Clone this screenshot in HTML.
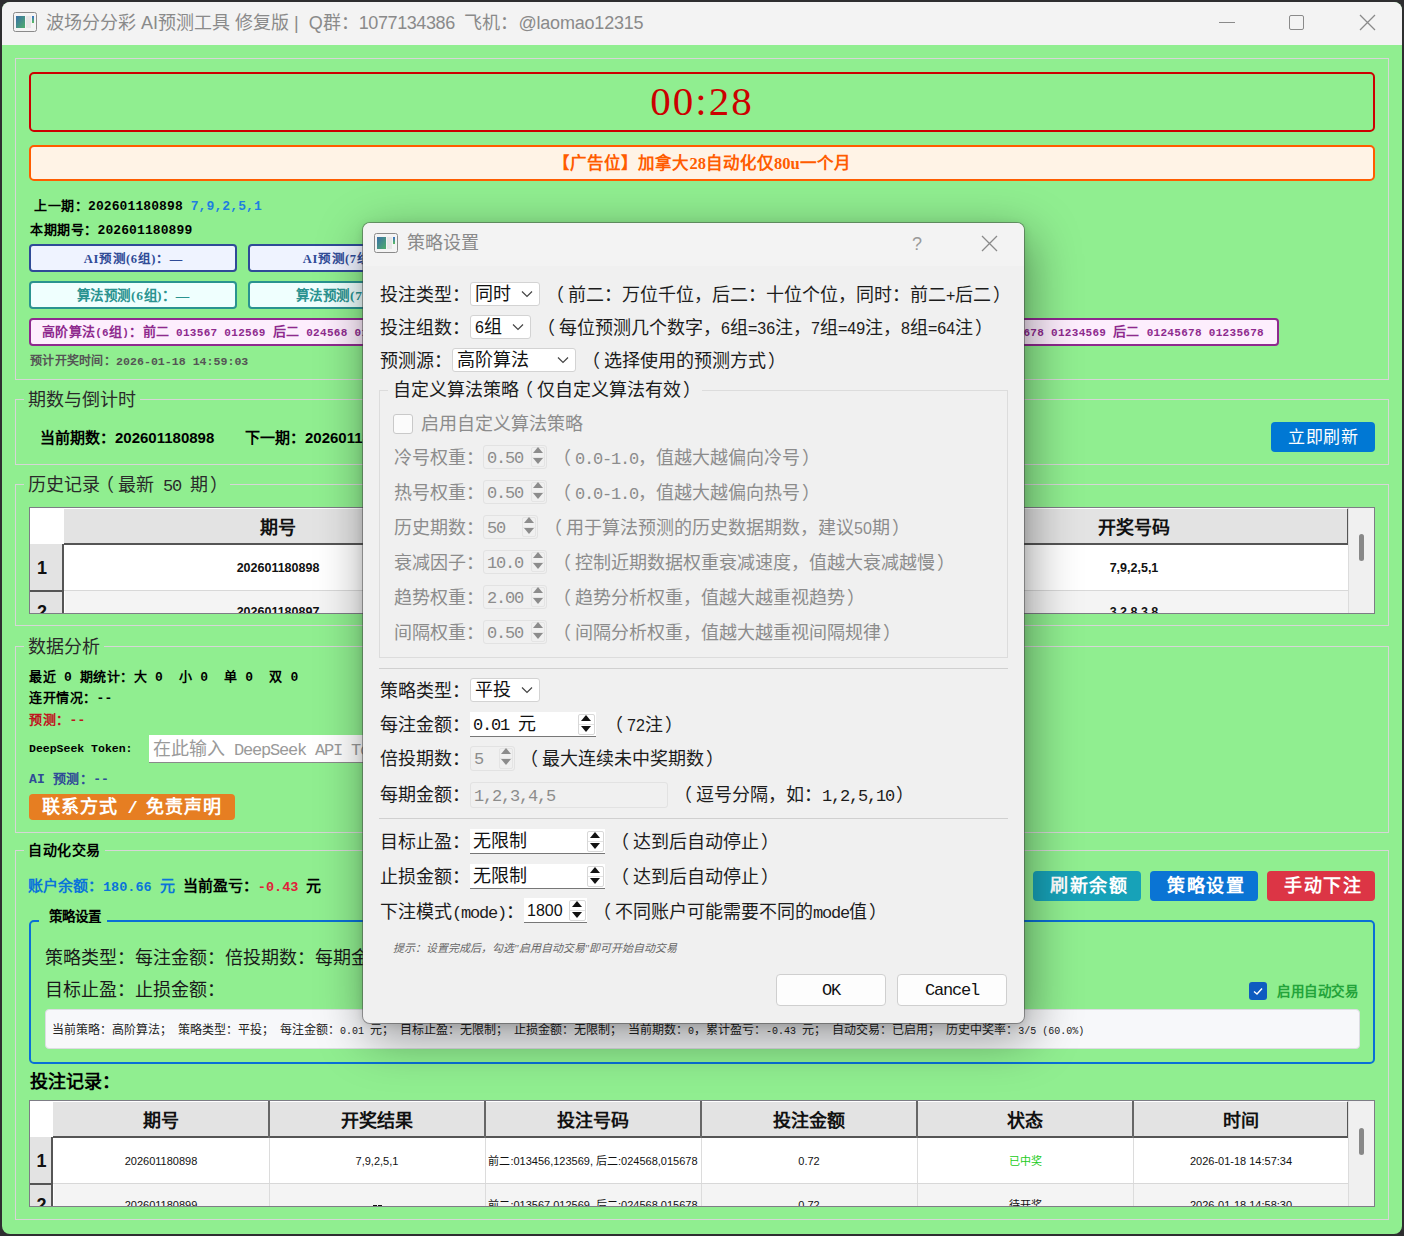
<!DOCTYPE html>
<html lang="zh-CN">
<head>
<meta charset="utf-8">
<style>
html,body{margin:0;padding:0;}
body{width:1404px;height:1236px;overflow:hidden;background:#2e2e30;position:relative;font-family:"Liberation Serif",serif;}
.a{position:absolute;box-sizing:border-box;}
.t{position:absolute;white-space:pre;line-height:20px;height:20px;}
.sans{font-family:"Liberation Sans",sans-serif;}
.serif{font-family:"Liberation Serif",serif;}
.mono{font-family:"Liberation Mono",monospace;}
.b{font-weight:bold;}
#win{left:2px;top:2px;width:1400px;height:1232px;border-radius:8px;background:#90ee90;overflow:hidden;}
#titlebar{left:0;top:0;width:1400px;height:43px;background:#f3f3f3;}
.frame{border:1px solid #d6d6d6;}
.gtitle{position:absolute;white-space:pre;background:#90ee90;padding:0 4px;font-size:18px;color:#2a2a2a;line-height:24px;height:24px;}
.predbtn{border-radius:4px;border:2px solid #2f4b97;background:#eff3ff;color:#2f4b97;font-weight:bold;font-size:12.5px;text-align:center;line-height:26px;letter-spacing:0.6px;text-indent:0.6px;}
.algbtn{border-radius:4px;border:2px solid #2a9390;background:#effffe;color:#2a9390;font-weight:bold;font-size:13.5px;text-align:center;line-height:25px;letter-spacing:0.6px;text-indent:0.6px;}
.tbl{border:1px solid #7d7d85;background:#fff;overflow:hidden;}
.hdr{background:#e3e3e3;}
.hdrtxt{position:absolute;font-family:"Liberation Sans",sans-serif;font-weight:bold;font-size:18px;text-align:center;line-height:40px;color:#111;}
.cell{position:absolute;font-family:"Liberation Sans",sans-serif;font-size:11px;text-align:center;color:#111;white-space:pre;}
.btn{border-radius:4px;color:#fff;text-align:center;font-weight:bold;}
</style>
</head>
<body>
<div id="win" class="a">
  <div id="titlebar" class="a"></div>
</div>

<!-- title bar contents (page coords) -->
<svg class="a" style="left:13px;top:12px" width="24" height="20" viewBox="0 0 24 20">
  <rect x="0.5" y="0.5" width="23" height="19" rx="2" fill="#f4f4f4" stroke="#8a8a8a"/>
  <defs><linearGradient id="ig" x1="0" y1="0" x2="1" y2="1"><stop offset="0" stop-color="#3a6fa8"/><stop offset="1" stop-color="#4fae6a"/></linearGradient>
  <linearGradient id="ig2" x1="0" y1="0" x2="0" y2="1"><stop offset="0" stop-color="#3a6fc8"/><stop offset="1" stop-color="#5bbf5b"/></linearGradient></defs>
  <rect x="3" y="4" width="9" height="12" fill="url(#ig)"/>
  <rect x="13" y="4" width="5" height="12" fill="#e6e6e6"/>
  <rect x="19" y="4" width="2" height="7" fill="url(#ig2)"/>
</svg>
<div class="t sans" style="left:46px;top:12px;font-size:18px;color:#8a8a8a;line-height:22px;height:22px;">波场分分彩 AI预测工具 修复版 |  Q群：<span style="letter-spacing:-0.4px">1077134386 </span> 飞机：<span style="letter-spacing:-0.2px">@laomao12315</span></div>
<div class="a" style="left:1219px;top:22px;width:16px;height:1px;background:#8a8a8a"></div>
<div class="a" style="left:1289px;top:15px;width:15px;height:15px;border:1.5px solid #8a8a8a;border-radius:2px"></div>
<svg class="a" style="left:1359px;top:14px" width="17" height="17" viewBox="0 0 17 17"><path d="M1 1L16 16M16 1L1 16" stroke="#8a8a8a" stroke-width="1.3"/></svg>

<!-- ===== top frame ===== -->
<div class="a frame" style="left:15px;top:58px;width:1374px;height:322px"></div>
<div class="a" style="left:29px;top:72px;width:1346px;height:60px;border:2px solid #cc0000;border-radius:5px"></div>
<div class="t serif" style="left:29px;top:76px;width:1346px;text-align:center;font-size:41px;line-height:50px;height:50px;color:#cc0000;letter-spacing:2px">00:28</div>
<div class="a" style="left:29px;top:145px;width:1346px;height:36px;border:2px solid #ff5c00;border-radius:5px;background:#fff3e6"></div>
<div class="t serif b" style="left:29px;top:154px;width:1346px;text-align:center;font-size:16.5px;color:#ff5c00">【广告位】加拿大28自动化仅80u一个月</div>

<div class="t serif b" style="left:34px;top:196px;font-size:13px;letter-spacing:0.5px;color:#000">上一期：<i style="font-family:'Liberation Mono',monospace;font-style:normal;font-size:13px;letter-spacing:0.1px">202601180898 </i><span style="color:#1e7fe0"><i style="font-family:'Liberation Mono',monospace;font-style:normal;font-size:13px;letter-spacing:0.1px">7,9,2,5,1</i></span></div>
<div class="t serif b" style="left:30px;top:220px;font-size:13px;letter-spacing:0.5px;color:#000">本期期号：<i style="font-family:'Liberation Mono',monospace;font-style:normal;font-size:13px;letter-spacing:0.1px">202601180899</i></div>

<div class="a predbtn" style="left:29px;top:244px;width:208px;height:28px">AI预测(6组)：—</div>
<div class="a predbtn" style="left:248px;top:244px;width:208px;height:28px">AI预测(7组)：—</div>
<div class="a predbtn" style="left:467px;top:244px;width:208px;height:28px">AI预测(8组)：—</div>
<div class="a algbtn" style="left:29px;top:281px;width:208px;height:28px">算法预测(6组)：—</div>
<div class="a algbtn" style="left:248px;top:281px;width:208px;height:28px">算法预测(7组)：—</div>
<div class="a algbtn" style="left:467px;top:281px;width:208px;height:28px">算法预测(8组)：—</div>
<div class="a" style="left:29px;top:318px;width:1250px;height:28px;border:2px solid #8e2a8e;border-radius:4px;background:#fdeefd"></div>
<div class="t serif b" style="left:42px;top:322px;font-size:13px;letter-spacing:0.3px;color:#8e2a8e">高阶算法<i style="font-family:'Liberation Mono',monospace;font-style:normal;font-size:11px;letter-spacing:0.3px">(6</i>组<i style="font-family:'Liberation Mono',monospace;font-style:normal;font-size:11px;letter-spacing:0.3px">)</i>：前二<i style="font-family:'Liberation Mono',monospace;font-style:normal;font-size:11px;letter-spacing:0.3px"> 013567 012569 </i>后二<i style="font-family:'Liberation Mono',monospace;font-style:normal;font-size:11px;letter-spacing:0.3px"> 024568 015678 </i>｜高阶算法<i style="font-family:'Liberation Mono',monospace;font-style:normal;font-size:11px;letter-spacing:0.3px">(7</i>组<i style="font-family:'Liberation Mono',monospace;font-style:normal;font-size:11px;letter-spacing:0.3px">)</i>：前二<i style="font-family:'Liberation Mono',monospace;font-style:normal;font-size:11px;letter-spacing:0.3px"> 0134567 0125679</i></div>
<div class="t serif b" style="left:1004px;top:322px;width:260px;text-align:right;font-size:13px;letter-spacing:0.3px;color:#8e2a8e;overflow:hidden"><i style="font-family:'Liberation Mono',monospace;font-style:normal;font-size:11px;letter-spacing:0.3px">5678 01234569 </i>后二<i style="font-family:'Liberation Mono',monospace;font-style:normal;font-size:11px;letter-spacing:0.3px"> 01245678 01235678</i></div>
<div class="t serif b" style="left:30px;top:351px;font-size:12px;letter-spacing:0.3px;color:#555">预计开奖时间：<i style="font-family:'Liberation Mono',monospace;font-style:normal;font-size:11.6px;letter-spacing:0px">2026-01-18 14:59:03</i></div>

<!-- ===== 期数与倒计时 ===== -->
<div class="a frame" style="left:15px;top:399px;width:1374px;height:66px"></div>
<div class="gtitle" style="left:24px;top:388px">期数与倒计时</div>
<div class="t sans b" style="left:40px;top:428px;font-size:15px;color:#000">当前期数：202601180898</div>
<div class="t sans b" style="left:245px;top:428px;font-size:15px;color:#000">下一期：202601180899</div>
<div class="a btn" style="left:1271px;top:422px;width:104px;height:30px;background:#0078d4;font-weight:normal;font-size:17px;line-height:32px;letter-spacing:0.7px;text-indent:0.7px">立即刷新</div>

<!-- ===== 历史记录 ===== -->
<div class="a frame" style="left:15px;top:484px;width:1374px;height:142px"></div>
<div class="gtitle" style="left:24px;top:473px">历史记录<i class="lp">（</i>最新<i class="m"> 50 </i>期<i class="rp">）</i></div>
<div class="a tbl" style="left:29px;top:507px;width:1346px;height:107px">
  <div class="a hdr" style="left:34px;top:0;width:1285px;height:37px;border-top:1px solid #fff;border-right:2px solid #555;border-bottom:2px solid #555"></div>
  <div class="a hdr" style="left:0;top:36px;width:34px;height:46px;border-right:2px solid #555;"></div>
  <div class="a hdr" style="left:0;top:82px;width:34px;height:30px;border-top:2px solid #555;border-right:2px solid #555"></div>
  <div class="a" style="left:34px;top:82px;width:1285px;height:1px;background:#d8d8d8"></div>
  <div class="a" style="left:35px;top:83px;width:1284px;height:30px;background:#f4f4f4"></div>
  <div class="a" style="left:1318px;top:0;width:28px;height:107px;background:#f0f0f0;border-left:1px solid #dcdcdc"></div>
  <div class="a" style="left:1329px;top:26px;width:5px;height:27px;background:#888;border-radius:3px"></div>
  <div class="hdrtxt" style="left:34px;top:0;width:428px">期号</div>
  <div class="hdrtxt" style="left:462px;top:0;width:428px">开奖时间</div>
  <div class="hdrtxt" style="left:890px;top:0;width:428px">开奖号码</div>
  <div class="cell b" style="left:7px;top:50px;width:12px;font-size:18px;line-height:20px;text-align:left">1</div>
  <div class="cell b" style="left:7px;top:94px;width:12px;font-size:18px;line-height:20px;text-align:left">2</div>
  <div class="cell b" style="left:34px;top:50px;width:428px;font-size:12.5px;line-height:20px">202601180898</div>
  <div class="cell b" style="left:890px;top:50px;width:428px;font-size:12.5px;line-height:20px">7,9,2,5,1</div>
  <div class="cell b" style="left:34px;top:94px;width:428px;font-size:12.5px;line-height:20px">202601180897</div>
  <div class="cell b" style="left:890px;top:94px;width:428px;font-size:12.5px;line-height:20px">3,2,8,3,8</div>
</div>
<!-- ===== 数据分析 ===== -->
<div class="a frame" style="left:15px;top:646px;width:1374px;height:187px"></div>
<div class="gtitle" style="left:24px;top:635px">数据分析</div>
<div class="t serif b" style="left:29px;top:667px;font-size:13px;letter-spacing:0.5px;color:#000">最近<i style="font-family:'Liberation Mono',monospace;font-style:normal;font-size:13px;letter-spacing:0.1px"> 0 </i>期统计：大<i style="font-family:'Liberation Mono',monospace;font-style:normal;font-size:13px;letter-spacing:0.1px"> 0  </i>小<i style="font-family:'Liberation Mono',monospace;font-style:normal;font-size:13px;letter-spacing:0.1px"> 0  </i>单<i style="font-family:'Liberation Mono',monospace;font-style:normal;font-size:13px;letter-spacing:0.1px"> 0  </i>双<i style="font-family:'Liberation Mono',monospace;font-style:normal;font-size:13px;letter-spacing:0.1px"> 0</i></div>
<div class="t serif b" style="left:29px;top:688px;font-size:13px;letter-spacing:0.5px;color:#000">连开情况：<i style="font-family:'Liberation Mono',monospace;font-style:normal;font-size:13px;letter-spacing:0.1px">--</i></div>
<div class="t serif b" style="left:29px;top:710px;font-size:13px;letter-spacing:0.5px;color:#c0141e">预测：<i style="font-family:'Liberation Mono',monospace;font-style:normal;font-size:13px;letter-spacing:0.1px">--</i></div>
<div class="t b" style="left:29px;top:737px;color:#000"><i style="font-family:'Liberation Mono',monospace;font-style:normal;font-size:11.5px;letter-spacing:0px">DeepSeek Token:</i></div>
<div class="a" style="left:149px;top:735px;width:560px;height:28px;background:#fff;border-bottom:1px solid #8a8a8a"></div>
<div class="t serif" style="left:153px;top:739px;font-size:18px;color:#9a9a9a;">在此输入<i style="font-family:'Liberation Mono',monospace;font-style:normal;font-size:17px;letter-spacing:-1.2px"> DeepSeek API Token</i></div>
<div class="t serif b" style="left:29px;top:769px;font-size:13px;letter-spacing:0.5px;color:#2f4b97"><i style="font-family:'Liberation Mono',monospace;font-style:normal;font-size:13px;letter-spacing:0.1px">AI </i>预测：<i style="font-family:'Liberation Mono',monospace;font-style:normal;font-size:13px;letter-spacing:0.1px">--</i></div>
<div class="a btn" style="left:29px;top:794px;width:206px;height:26px;background:#e67e22;font-size:18px;line-height:26px;letter-spacing:1px">联系方式<i style="font-family:'Liberation Mono',monospace;font-style:normal;font-size:17px;letter-spacing:-1.2px"> / </i>免责声明</div>

<!-- ===== 自动化交易 ===== -->
<div class="a frame" style="left:15px;top:850px;width:1374px;height:370px"></div>
<div class="gtitle b" style="left:24px;top:839px;font-size:14px;letter-spacing:0.5px;color:#000">自动化交易</div>
<div class="t serif b" style="left:28px;top:876px;font-size:15px;color:#0a74da">账户余额：<i style="font-family:'Liberation Mono',monospace;font-style:normal;font-size:13.5px;letter-spacing:0px">180.66 </i>元<i style="font-family:'Liberation Mono',monospace;font-style:normal;font-size:13.5px;letter-spacing:0px"> </i><span style="color:#000">当前盈亏：</span><span style="color:#e0203a"><i style="font-family:'Liberation Mono',monospace;font-style:normal;font-size:13.5px;letter-spacing:0px">-0.43</i></span><span style="color:#000"><i style="font-family:'Liberation Mono',monospace;font-style:normal;font-size:13.5px;letter-spacing:0px"> </i>元</span></div>
<div class="a btn" style="left:1033px;top:871px;width:108px;height:30px;background:#17a2b8;font-size:17px;line-height:30px;font-size:18px;letter-spacing:1.5px;text-indent:4px">刷新余额</div>
<div class="a btn" style="left:1150px;top:871px;width:108px;height:30px;background:#0a74d4;font-size:17px;line-height:30px;font-size:18px;letter-spacing:1.5px;text-indent:4px">策略设置</div>
<div class="a btn" style="left:1267px;top:871px;width:108px;height:30px;background:#dc3545;font-size:17px;line-height:30px;font-size:18px;letter-spacing:1.5px;text-indent:4px">手动下注</div>

<div class="a" style="left:29px;top:920px;width:1346px;height:144px;border:2px solid #0a6fd6;border-radius:5px"></div>
<div class="gtitle b" style="left:39px;top:905px;font-size:13.5px;color:#000;padding:0 6px 0 10px">策略设置</div>
<div class="t serif" style="left:45px;top:948px;font-size:18px;color:#1a1a1a">策略类型：每注金额：倍投期数：每期金额：</div>
<div class="t serif" style="left:45px;top:980px;font-size:18px;color:#1a1a1a">目标止盈：止损金额：</div>
<div class="a" style="left:1249px;top:982px;width:18px;height:18px;border-radius:3px;background:#0f5cc0"></div>
<svg class="a" style="left:1249px;top:982px" width="18" height="18" viewBox="0 0 18 18"><path d="M5 9.5L8 12L13 6.5" fill="none" stroke="#fff" stroke-width="1.4"/></svg>
<div class="t serif b" style="left:1277px;top:982px;font-size:13.5px;color:#23a33a;letter-spacing:0.5px">启用自动交易</div>
<div class="a" style="left:45px;top:1009px;width:1315px;height:40px;background:#f7f8fa;border:1px solid #dcdce2;border-radius:4px"></div>
<div class="t serif" style="left:52px;top:1020px;font-size:12px;color:#222">当前策略：高阶算法；<i style="font-family:'Liberation Mono',monospace;font-style:normal;font-size:10px;letter-spacing:0px"> </i>策略类型：平投；<i style="font-family:'Liberation Mono',monospace;font-style:normal;font-size:10px;letter-spacing:0px"> </i>每注金额：<i style="font-family:'Liberation Mono',monospace;font-style:normal;font-size:10px;letter-spacing:0px">0.01 </i>元；<i style="font-family:'Liberation Mono',monospace;font-style:normal;font-size:10px;letter-spacing:0px"> </i>目标止盈：无限制；<i style="font-family:'Liberation Mono',monospace;font-style:normal;font-size:10px;letter-spacing:0px"> </i>止损金额：无限制；<i style="font-family:'Liberation Mono',monospace;font-style:normal;font-size:10px;letter-spacing:0px"> </i>当前期数：<i style="font-family:'Liberation Mono',monospace;font-style:normal;font-size:10px;letter-spacing:0px">0</i>，累计盈亏：<i style="font-family:'Liberation Mono',monospace;font-style:normal;font-size:10px;letter-spacing:0px">-0.43 </i>元；<i style="font-family:'Liberation Mono',monospace;font-style:normal;font-size:10px;letter-spacing:0px"> </i>自动交易：已启用；<i style="font-family:'Liberation Mono',monospace;font-style:normal;font-size:10px;letter-spacing:0px"> </i>历史中奖率：<i style="font-family:'Liberation Mono',monospace;font-style:normal;font-size:10px;letter-spacing:0px">3/5 (60.0%)</i></div>

<div class="t serif b" style="left:30px;top:1071px;font-size:18px;color:#000;line-height:22px;height:22px">投注记录：</div>
<div class="a tbl" style="left:29px;top:1100px;width:1346px;height:107px">
  <div class="a hdr" style="left:23px;top:0;width:1296px;height:37px;border-top:1px solid #fff;border-right:2px solid #555;border-bottom:2px solid #555"></div>
  <div class="a" style="left:238px;top:0;width:2px;height:37px;background:#666"></div>
  <div class="a" style="left:454px;top:0;width:2px;height:37px;background:#666"></div>
  <div class="a" style="left:670px;top:0;width:2px;height:37px;background:#666"></div>
  <div class="a" style="left:886px;top:0;width:2px;height:37px;background:#666"></div>
  <div class="a" style="left:1102px;top:0;width:2px;height:37px;background:#666"></div>
  <div class="a" style="left:239px;top:37px;width:1px;height:70px;background:#dcdcdc"></div>
  <div class="a" style="left:455px;top:37px;width:1px;height:70px;background:#dcdcdc"></div>
  <div class="a" style="left:671px;top:37px;width:1px;height:70px;background:#dcdcdc"></div>
  <div class="a" style="left:887px;top:37px;width:1px;height:70px;background:#dcdcdc"></div>
  <div class="a" style="left:1103px;top:37px;width:1px;height:70px;background:#dcdcdc"></div>
  <div class="a hdr" style="left:0;top:36px;width:23px;height:46px;border-right:2px solid #555;"></div>
  <div class="a hdr" style="left:0;top:82px;width:23px;height:30px;border-top:2px solid #555;border-right:2px solid #555"></div>
  <div class="a" style="left:23px;top:82px;width:1296px;height:1px;background:#d8d8d8"></div>
  <div class="a" style="left:24px;top:83px;width:1295px;height:30px;background:#f4f4f4;z-index:0"></div>
  <div class="a" style="left:239px;top:83px;width:1px;height:30px;background:#dcdcdc"></div>
  <div class="a" style="left:455px;top:83px;width:1px;height:30px;background:#dcdcdc"></div>
  <div class="a" style="left:671px;top:83px;width:1px;height:30px;background:#dcdcdc"></div>
  <div class="a" style="left:887px;top:83px;width:1px;height:30px;background:#dcdcdc"></div>
  <div class="a" style="left:1103px;top:83px;width:1px;height:30px;background:#dcdcdc"></div>
  <div class="a" style="left:1318px;top:0;width:28px;height:107px;background:#f0f0f0;border-left:1px solid #dcdcdc"></div>
  <div class="a" style="left:1329px;top:27px;width:5px;height:27px;background:#888;border-radius:3px"></div>
  <div class="hdrtxt" style="left:23px;top:0;width:216px">期号</div>
  <div class="hdrtxt" style="left:239px;top:0;width:216px">开奖结果</div>
  <div class="hdrtxt" style="left:455px;top:0;width:216px">投注号码</div>
  <div class="hdrtxt" style="left:671px;top:0;width:216px">投注金额</div>
  <div class="hdrtxt" style="left:887px;top:0;width:216px">状态</div>
  <div class="hdrtxt" style="left:1103px;top:0;width:216px">时间</div>
  <div class="cell b" style="left:0;top:50px;width:23px;font-size:18px;line-height:20px;">1</div>
  <div class="cell b" style="left:0;top:94px;width:23px;font-size:18px;line-height:20px;">2</div>
  <div class="cell" style="left:23px;top:50px;width:216px;line-height:20px">202601180898</div>
  <div class="cell" style="left:239px;top:50px;width:216px;line-height:20px">7,9,2,5,1</div>
  <div class="cell" style="left:455px;top:50px;width:216px;line-height:20px">前二:013456,123569, 后二:024568,015678</div>
  <div class="cell" style="left:671px;top:50px;width:216px;line-height:20px">0.72</div>
  <div class="cell" style="left:887px;top:50px;width:216px;line-height:20px;color:#22cc22">已中奖</div>
  <div class="cell" style="left:1103px;top:50px;width:216px;line-height:20px">2026-01-18 14:57:34</div>
  <div class="cell" style="left:23px;top:94px;width:216px;line-height:20px">202601180899</div>
  <div class="a" style="left:343px;top:104px;width:4px;height:2px;background:#111"></div><div class="a" style="left:348px;top:104px;width:4px;height:2px;background:#111"></div>
  <div class="cell" style="left:455px;top:94px;width:216px;line-height:20px">前二:013567,012569, 后二:024568,015678</div>
  <div class="cell" style="left:671px;top:94px;width:216px;line-height:20px">0.72</div>
  <div class="cell" style="left:887px;top:94px;width:216px;line-height:20px">待开奖</div>
  <div class="cell" style="left:1103px;top:94px;width:216px;line-height:20px">2026-01-18 14:58:30</div>
</div>
<!-- ===== DIALOG ===== -->
<div class="a" id="dlg" style="left:362px;top:222px;width:663px;height:802px;border-radius:8px;background:#f0f0f0;background-clip:padding-box;border:1px solid rgba(60,60,60,0.45);box-shadow:5px 14px 50px rgba(0,0,0,0.40), 0 2px 8px rgba(0,0,0,0.10);overflow:hidden">
  <div class="a" style="left:0;top:0;width:663px;height:43px;background:#f3f3f3"></div>
</div>
<svg class="a" style="left:374px;top:233px" width="24" height="20" viewBox="0 0 24 20">
  <rect x="0.5" y="0.5" width="23" height="19" rx="2" fill="#f4f4f4" stroke="#8a8a8a"/>
  <rect x="3" y="4" width="9" height="12" fill="url(#ig)"/>
  <rect x="13" y="4" width="5" height="12" fill="#e6e6e6"/>
  <rect x="19" y="4" width="2" height="7" fill="url(#ig2)"/>
</svg>
<div class="t sans" style="left:407px;top:232px;font-size:18px;color:#8a8a8a;line-height:22px;height:22px;">策略设置</div>
<div class="t sans" style="left:912px;top:233px;font-size:18px;color:#9a9a9a;line-height:22px;height:22px;">?</div>
<svg class="a" style="left:981px;top:235px" width="17" height="17" viewBox="0 0 17 17"><path d="M1 1L16 16M16 1L1 16" stroke="#8a8a8a" stroke-width="1.3"/></svg>

<style>
.dl{position:absolute;white-space:pre;font-size:18px;line-height:26px;height:26px;color:#1c1c1c;font-family:"Liberation Serif",serif;}
.m{font-family:"Liberation Mono",monospace;font-size:17px;letter-spacing:-1.2px;font-style:normal;}
.s{font-family:"Liberation Sans",sans-serif;font-size:16px;font-style:normal;}
.dis{color:#8c8c8c;}
.lp{position:relative;left:-4px;font-style:normal;}
.rp{position:relative;left:2px;font-style:normal;}
.combo{position:absolute;box-sizing:border-box;background:#fff;border:1px solid #d3d3d3;border-radius:3px;}
.combo .v{position:absolute;left:4px;top:0;font-size:18px;line-height:22px;white-space:pre;color:#111;}
.chev{position:absolute;top:7px;width:12px;height:8px;}
.spin{position:absolute;box-sizing:border-box;background:#f0f0f0;border:1px solid #e2e2e2;border-radius:3px;}
.spin .v{position:absolute;left:3px;top:0;font-size:18px;line-height:23px;white-space:pre;color:#8c8c8c;}
.espin{position:absolute;box-sizing:border-box;background:#fff;border-bottom:1px solid #777;}
.espin .v{position:absolute;left:3px;top:0;font-size:18px;line-height:24px;white-space:pre;color:#111;}
.sb{position:absolute;box-sizing:border-box;border:1px solid #d8d8d8;border-radius:2px;background:linear-gradient(#fff 0,#fff 9px,#e2e2e2 9px,#e2e2e2 10px,#fff 10px);}
.sbd{position:absolute;box-sizing:border-box;border:1px solid #e4e4e4;border-radius:2px;background:linear-gradient(#f0f0f0 0,#f0f0f0 9px,#e4e4e4 9px,#e4e4e4 10px,#f0f0f0 10px);}
</style>
<svg width="0" height="0" style="position:absolute">
  <defs>
    <path id="chev" d="M1 1.5L6 6.5L11 1.5" fill="none" stroke="#444" stroke-width="1.2"/>
    <g id="updn"><path d="M5 0L10 6H0Z"/><path d="M0 11H10L5 17Z"/></g>
  </defs>
</svg>
<div class="dl " style="left:380px;top:282px">投注类型：</div>
<div class="combo" style="left:470px;top:282px;width:70px;height:24px"><div class="v">同时</div><svg class="chev" style="left:50px" viewBox="0 0 12 8"><path d="M1 1.5L6 6.5L11 1.5" fill="none" stroke="#444" stroke-width="1.2"/></svg></div>
<div class="dl " style="left:550px;top:282px"><i class="lp">（</i>前二：万位千位，后二：十位个位，同时：前二<i class="s">+</i>后二<i class="rp">）</i></div>
<div class="dl " style="left:380px;top:315px">投注组数：</div>
<div class="combo" style="left:470px;top:315px;width:61px;height:24px"><div class="v"><i class="s">6</i>组</div><svg class="chev" style="left:41px" viewBox="0 0 12 8"><path d="M1 1.5L6 6.5L11 1.5" fill="none" stroke="#444" stroke-width="1.2"/></svg></div>
<div class="dl " style="left:541px;top:315px"><i class="lp">（</i>每位预测几个数字，<i class="s">6</i>组<i class="s">=36</i>注，<i class="s">7</i>组<i class="s">=49</i>注，<i class="s">8</i>组<i class="s">=64</i>注<i class="rp">）</i></div>
<div class="dl " style="left:380px;top:348px">预测源：</div>
<div class="combo" style="left:452px;top:348px;width:124px;height:24px"><div class="v">高阶算法</div><svg class="chev" style="left:104px" viewBox="0 0 12 8"><path d="M1 1.5L6 6.5L11 1.5" fill="none" stroke="#444" stroke-width="1.2"/></svg></div>
<div class="dl " style="left:586px;top:348px"><i class="lp">（</i>选择使用的预测方式<i class="rp">）</i></div>
<div class="a" style="left:379px;top:390px;width:629px;height:268px;border:1px solid #dcdcdc;"></div>
<div class="dl" style="left:388px;top:377px;background:#f0f0f0;padding:0 3px 0 5px">自定义算法策略<i class="lp">（</i>仅自定义算法有效<i class="rp">）</i></div>
<div class="a" style="left:393px;top:414px;width:20px;height:20px;border:1px solid #c9c9c9;border-radius:3px;background:#fbfbfb"></div>
<div class="dl dis" style="left:421px;top:411px">启用自定义算法策略</div>
<div class="dl dis" style="left:394px;top:445px">冷号权重：</div>
<div class="spin" style="left:483px;top:445px;width:64px;height:24px"><div class="v"><i class="m">0.50</i></div></div>
<div class="sbd" style="left:531px;top:447px;width:14px;height:20px"></div>
<svg class="a" style="left:533px;top:447px" width="10" height="17" viewBox="0 0 10 17" fill="#8c8c8c"><path d="M5 0L10 6H0Z"/><path d="M0 11H10L5 17Z"/></svg>
<div class="dl dis" style="left:557px;top:445px"><i class="lp">（</i><i class="m">0.0-1.0</i>，值越大越偏向冷号<i class="rp">）</i></div>
<div class="dl dis" style="left:394px;top:480px">热号权重：</div>
<div class="spin" style="left:483px;top:480px;width:64px;height:24px"><div class="v"><i class="m">0.50</i></div></div>
<div class="sbd" style="left:531px;top:482px;width:14px;height:20px"></div>
<svg class="a" style="left:533px;top:482px" width="10" height="17" viewBox="0 0 10 17" fill="#8c8c8c"><path d="M5 0L10 6H0Z"/><path d="M0 11H10L5 17Z"/></svg>
<div class="dl dis" style="left:557px;top:480px"><i class="lp">（</i><i class="m">0.0-1.0</i>，值越大越偏向热号<i class="rp">）</i></div>
<div class="dl dis" style="left:394px;top:515px">历史期数：</div>
<div class="spin" style="left:483px;top:515px;width:55px;height:24px"><div class="v"><i class="m">50</i></div></div>
<div class="sbd" style="left:522px;top:517px;width:14px;height:20px"></div>
<svg class="a" style="left:524px;top:517px" width="10" height="17" viewBox="0 0 10 17" fill="#8c8c8c"><path d="M5 0L10 6H0Z"/><path d="M0 11H10L5 17Z"/></svg>
<div class="dl dis" style="left:548px;top:515px"><i class="lp">（</i>用于算法预测的历史数据期数，建议<i class="s">50</i>期<i class="rp">）</i></div>
<div class="dl dis" style="left:394px;top:550px">衰减因子：</div>
<div class="spin" style="left:483px;top:550px;width:64px;height:24px"><div class="v"><i class="m">10.0</i></div></div>
<div class="sbd" style="left:531px;top:552px;width:14px;height:20px"></div>
<svg class="a" style="left:533px;top:552px" width="10" height="17" viewBox="0 0 10 17" fill="#8c8c8c"><path d="M5 0L10 6H0Z"/><path d="M0 11H10L5 17Z"/></svg>
<div class="dl dis" style="left:557px;top:550px"><i class="lp">（</i>控制近期数据权重衰减速度，值越大衰减越慢<i class="rp">）</i></div>
<div class="dl dis" style="left:394px;top:585px">趋势权重：</div>
<div class="spin" style="left:483px;top:585px;width:64px;height:24px"><div class="v"><i class="m">2.00</i></div></div>
<div class="sbd" style="left:531px;top:587px;width:14px;height:20px"></div>
<svg class="a" style="left:533px;top:587px" width="10" height="17" viewBox="0 0 10 17" fill="#8c8c8c"><path d="M5 0L10 6H0Z"/><path d="M0 11H10L5 17Z"/></svg>
<div class="dl dis" style="left:557px;top:585px"><i class="lp">（</i>趋势分析权重，值越大越重视趋势<i class="rp">）</i></div>
<div class="dl dis" style="left:394px;top:620px">间隔权重：</div>
<div class="spin" style="left:483px;top:620px;width:64px;height:24px"><div class="v"><i class="m">0.50</i></div></div>
<div class="sbd" style="left:531px;top:622px;width:14px;height:20px"></div>
<svg class="a" style="left:533px;top:622px" width="10" height="17" viewBox="0 0 10 17" fill="#8c8c8c"><path d="M5 0L10 6H0Z"/><path d="M0 11H10L5 17Z"/></svg>
<div class="dl dis" style="left:557px;top:620px"><i class="lp">（</i>间隔分析权重，值越大越重视间隔规律<i class="rp">）</i></div>
<div class="a" style="left:379px;top:668px;width:629px;height:1px;background:#d0d0d0"></div>
<div class="dl " style="left:380px;top:678px">策略类型：</div>
<div class="combo" style="left:470px;top:678px;width:70px;height:24px"><div class="v">平投</div><svg class="chev" style="left:50px" viewBox="0 0 12 8"><path d="M1 1.5L6 6.5L11 1.5" fill="none" stroke="#444" stroke-width="1.2"/></svg></div>
<div class="dl " style="left:380px;top:712px">每注金额：</div>
<div class="espin" style="left:470px;top:712px;width:126px;height:25px"><div class="v"><i class="m">0.01 </i>元</div></div>
<div class="sb" style="left:578px;top:714px;width:17px;height:21px"></div>
<svg class="a" style="left:581px;top:715px" width="10" height="17" viewBox="0 0 10 17" fill="#111"><path d="M5 0L10 6H0Z"/><path d="M0 11H10L5 17Z"/></svg>
<div class="dl " style="left:609px;top:712px"><i class="lp">（</i><i class="s">72</i>注<i class="rp">）</i></div>
<div class="dl " style="left:380px;top:746px">倍投期数：</div>
<div class="spin" style="left:470px;top:746px;width:45px;height:25px"><div class="v"><i class="m">5</i></div></div>
<div class="sbd" style="left:499px;top:748px;width:14px;height:21px"></div>
<svg class="a" style="left:501px;top:748px" width="10" height="17" viewBox="0 0 10 17" fill="#8c8c8c"><path d="M5 0L10 6H0Z"/><path d="M0 11H10L5 17Z"/></svg>
<div class="dl " style="left:524px;top:746px"><i class="lp">（</i>最大连续未中奖期数<i class="rp">）</i></div>
<div class="dl " style="left:380px;top:782px">每期金额：</div>
<div class="spin" style="left:470px;top:782px;width:198px;height:26px"><div class="v" style="line-height:25px"><i class="m">1,2,3,4,5</i></div></div>
<div class="dl " style="left:678px;top:782px"><i class="lp">（</i>逗号分隔，如：<i class="m">1,2,5,10</i><i class="rp">）</i></div>
<div class="a" style="left:379px;top:818px;width:629px;height:1px;background:#d0d0d0"></div>
<div class="dl " style="left:380px;top:829px">目标止盈：</div>
<div class="espin" style="left:470px;top:829px;width:135px;height:25px"><div class="v">无限制</div></div>
<div class="sb" style="left:587px;top:831px;width:17px;height:21px"></div>
<svg class="a" style="left:590px;top:832px" width="10" height="17" viewBox="0 0 10 17" fill="#111"><path d="M5 0L10 6H0Z"/><path d="M0 11H10L5 17Z"/></svg>
<div class="dl " style="left:615px;top:829px"><i class="lp">（</i>达到后自动停止<i class="rp">）</i></div>
<div class="dl " style="left:380px;top:864px">止损金额：</div>
<div class="espin" style="left:470px;top:864px;width:135px;height:25px"><div class="v">无限制</div></div>
<div class="sb" style="left:587px;top:866px;width:17px;height:21px"></div>
<svg class="a" style="left:590px;top:867px" width="10" height="17" viewBox="0 0 10 17" fill="#111"><path d="M5 0L10 6H0Z"/><path d="M0 11H10L5 17Z"/></svg>
<div class="dl " style="left:615px;top:864px"><i class="lp">（</i>达到后自动停止<i class="rp">）</i></div>
<div class="dl " style="left:380px;top:899px">下注模式<i class="m">(mode)</i>：</div>
<div class="espin" style="left:524px;top:898px;width:63px;height:25px"><div class="v"><i class="s">1800</i></div></div>
<div class="sb" style="left:569px;top:900px;width:17px;height:21px"></div>
<svg class="a" style="left:572px;top:901px" width="10" height="17" viewBox="0 0 10 17" fill="#111"><path d="M5 0L10 6H0Z"/><path d="M0 11H10L5 17Z"/></svg>
<div class="dl " style="left:597px;top:899px"><i class="lp">（</i>不同账户可能需要不同的<i class="m">mode</i>值<i class="rp">）</i></div>
<div class="t serif" style="left:393px;top:938px;font-size:11px;font-style:italic;color:#666;line-height:20px">提示：设置完成后，勾选"启用自动交易"即可开始自动交易</div>
<div class="a" style="left:776px;top:974px;width:110px;height:32px;background:#fdfdfd;border:1px solid #cfcfcf;border-radius:4px;line-height:30px;text-align:center;color:#111"><i class="m">OK</i></div>
<div class="a" style="left:897px;top:974px;width:110px;height:32px;background:#fdfdfd;border:1px solid #cfcfcf;border-radius:4px;line-height:30px;text-align:center;color:#111"><i class="m">Cancel</i></div>
</body>
</html>
